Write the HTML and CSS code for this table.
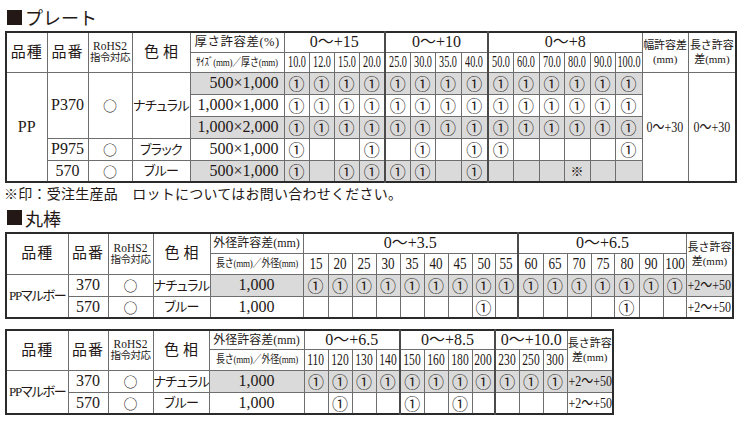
FILE: index.html
```html
<!DOCTYPE html>
<html lang="ja">
<head>
<meta charset="utf-8">
<title>PP</title>
<link rel="stylesheet" href="styles.css">
</head>
<body>
<div class="title"><span class="sq"></span><span>プレート</span></div>
<table class="t t1">
<colgroup>
<col><col><col><col><col>
<col><col><col><col><col><col><col><col><col><col><col><col><col><col>
<col><col>
</colgroup>
<tr class="h1">
<th rowspan="2" class="jp">品種</th>
<th rowspan="2" class="jp">品番</th>
<th rowspan="2" class="rohs">RoHS2<br><span class="rj">指令対応</span></th>
<th rowspan="2" class="jp sp">色相</th>
<th class="hs">厚さ許容差(%)</th>
<th colspan="4" class="grp">0〜+15</th>
<th colspan="4" class="grp g">0〜+10</th>
<th colspan="6" class="grp g">0〜+8</th>
<th rowspan="2" class="tol">幅許容差<br>(mm)</th>
<th rowspan="2" class="tol">長さ許容<br>差(mm)</th>
</tr>
<tr class="h2">
<th class="sz"><span class="cx">ｻｲｽﾞ(mm)／厚さ(mm)</span></th>
<th class="num"><span>10.0</span></th><th class="num"><span>12.0</span></th><th class="num"><span>15.0</span></th><th class="num"><span>20.0</span></th>
<th class="num g"><span>25.0</span></th><th class="num"><span>30.0</span></th><th class="num"><span>35.0</span></th><th class="num"><span>40.0</span></th>
<th class="num g"><span>50.0</span></th><th class="num"><span>60.0</span></th><th class="num"><span>70.0</span></th><th class="num"><span>80.0</span></th><th class="num"><span>90.0</span></th><th class="num"><span>100.0</span></th>
</tr>
<tr class="r sh">
<td rowspan="5" class="txt">PP</td>
<td rowspan="3" class="txt">P370</td>
<td rowspan="3" class="mk">○</td>
<td rowspan="3" class="kn">ナチュラル</td>
<td class="dim s">500×1,000</td>
<td class="c s">①</td><td class="c s">①</td><td class="c s">①</td><td class="c s">①</td>
<td class="c s g">①</td><td class="c s">①</td><td class="c s">①</td><td class="c s">①</td>
<td class="c s g">①</td><td class="c s">①</td><td class="c s">①</td><td class="c s">①</td><td class="c s">①</td><td class="c s">①</td>
<td rowspan="5" class="tv"><span>0〜+30</span></td>
<td rowspan="5" class="tv"><span>0〜+30</span></td>
</tr>
<tr class="r">
<td class="dim">1,000×1,000</td>
<td class="c">①</td><td class="c">①</td><td class="c">①</td><td class="c">①</td>
<td class="c g">①</td><td class="c">①</td><td class="c">①</td><td class="c">①</td>
<td class="c g">①</td><td class="c">①</td><td class="c">①</td><td class="c">①</td><td class="c">①</td><td class="c">①</td>
</tr>
<tr class="r">
<td class="dim s">1,000×2,000</td>
<td class="c s">①</td><td class="c s">①</td><td class="c s">①</td><td class="c s">①</td>
<td class="c s g">①</td><td class="c s">①</td><td class="c s">①</td><td class="c s">①</td>
<td class="c s g">①</td><td class="c s">①</td><td class="c s">①</td><td class="c s">①</td><td class="c s">①</td><td class="c s">①</td>
</tr>
<tr class="r">
<td class="txt">P975</td>
<td class="mk">○</td>
<td class="kn">ブラック</td>
<td class="dim">500×1,000</td>
<td class="c">①</td><td class="c"></td><td class="c"></td><td class="c">①</td>
<td class="c g"></td><td class="c">①</td><td class="c"></td><td class="c">①</td>
<td class="c g">①</td><td class="c"></td><td class="c"></td><td class="c"></td><td class="c"></td><td class="c">①</td>
</tr>
<tr class="r">
<td class="txt">570</td>
<td class="mk">○</td>
<td class="kn">ブルー</td>
<td class="dim s">500×1,000</td>
<td class="c s">①</td><td class="c s"></td><td class="c s">①</td><td class="c s">①</td>
<td class="c s g">①</td><td class="c s">①</td><td class="c s"></td><td class="c s">①</td>
<td class="c s g"></td><td class="c s"></td><td class="c s"></td><td class="c s ast">※</td><td class="c s"></td><td class="c s"></td>
</tr>
</table>
<p class="note">※印：受注生産品　ロットについてはお問い合わせください。</p>

<div class="title t2title"><span class="sq"></span><span>丸棒</span></div>
<table class="t t2">
<colgroup>
<col><col><col><col><col>
<col><col><col><col><col><col><col><col><col><col><col><col><col><col><col><col>
<col>
</colgroup>
<tr class="h1">
<th rowspan="2" class="jp">品種</th>
<th rowspan="2" class="jp">品番</th>
<th rowspan="2" class="rohs">RoHS2<br><span class="rj">指令対応</span></th>
<th rowspan="2" class="jp sp">色相</th>
<th class="hs2">外径許容差(mm)</th>
<th colspan="9" class="grp">0〜+3.5</th>
<th colspan="7" class="grp g">0〜+6.5</th>
<th rowspan="2" class="tol">長さ許容<br>差(mm)</th>
</tr>
<tr class="h2">
<th class="sz"><span class="cx">長さ(mm)／外径(mm)</span></th>
<th class="num2"><span>15</span></th><th class="num2"><span>20</span></th><th class="num2"><span>25</span></th><th class="num2"><span>30</span></th><th class="num2"><span>35</span></th><th class="num2"><span>40</span></th><th class="num2"><span>45</span></th><th class="num2"><span>50</span></th><th class="num2"><span>55</span></th>
<th class="num2 g"><span>60</span></th><th class="num2"><span>65</span></th><th class="num2"><span>70</span></th><th class="num2"><span>75</span></th><th class="num2"><span>80</span></th><th class="num2"><span>90</span></th><th class="num2"><span>100</span></th>
</tr>
<tr class="rr">
<td rowspan="2" class="kn pm">PPマルボー</td>
<td class="txt">370</td>
<td class="mk">○</td>
<td class="kn">ナチュラル</td>
<td class="dim2 s">1,000</td>
<td class="c s">①</td><td class="c s">①</td><td class="c s">①</td><td class="c s">①</td><td class="c s">①</td><td class="c s">①</td><td class="c s">①</td><td class="c s">①</td><td class="c s">①</td>
<td class="c s g">①</td><td class="c s">①</td><td class="c s">①</td><td class="c s">①</td><td class="c s">①</td><td class="c s">①</td><td class="c s">①</td>
<td class="tv s"><span>+2〜+50</span></td>
</tr>
<tr class="rr">
<td class="txt">570</td>
<td class="mk">○</td>
<td class="kn">ブルー</td>
<td class="dim2">1,000</td>
<td class="c"></td><td class="c"></td><td class="c"></td><td class="c"></td><td class="c"></td><td class="c"></td><td class="c"></td><td class="c">①</td><td class="c"></td>
<td class="c g"></td><td class="c"></td><td class="c"></td><td class="c"></td><td class="c">①</td><td class="c"></td><td class="c"></td>
<td class="tv"><span>+2〜+50</span></td>
</tr>
</table>

<table class="t t3">
<colgroup>
<col><col><col><col><col>
<col><col><col><col><col><col><col><col><col><col><col>
<col>
</colgroup>
<tr class="h1">
<th rowspan="2" class="jp">品種</th>
<th rowspan="2" class="jp">品番</th>
<th rowspan="2" class="rohs">RoHS2<br><span class="rj">指令対応</span></th>
<th rowspan="2" class="jp sp">色相</th>
<th class="hs2">外径許容差(mm)</th>
<th colspan="4" class="grp">0〜+6.5</th>
<th colspan="4" class="grp g">0〜+8.5</th>
<th colspan="3" class="grp g">0〜+10.0</th>
<th rowspan="2" class="tol">長さ許容<br>差(mm)</th>
</tr>
<tr class="h2">
<th class="sz"><span class="cx">長さ(mm)／外径(mm)</span></th>
<th class="num3"><span>110</span></th><th class="num3"><span>120</span></th><th class="num3"><span>130</span></th><th class="num3"><span>140</span></th>
<th class="num3 g"><span>150</span></th><th class="num3"><span>160</span></th><th class="num3"><span>180</span></th><th class="num3"><span>200</span></th>
<th class="num3 g"><span>230</span></th><th class="num3"><span>250</span></th><th class="num3"><span>300</span></th>
</tr>
<tr class="rr">
<td rowspan="2" class="kn pm">PPマルボー</td>
<td class="txt">370</td>
<td class="mk">○</td>
<td class="kn">ナチュラル</td>
<td class="dim2 s">1,000</td>
<td class="c s">①</td><td class="c s">①</td><td class="c s">①</td><td class="c s">①</td>
<td class="c s g">①</td><td class="c s">①</td><td class="c s">①</td><td class="c s">①</td>
<td class="c s g">①</td><td class="c s">①</td><td class="c s">①</td>
<td class="tv s"><span>+2〜+50</span></td>
</tr>
<tr class="rr">
<td class="txt">570</td>
<td class="mk">○</td>
<td class="kn">ブルー</td>
<td class="dim2">1,000</td>
<td class="c"></td><td class="c">①</td><td class="c"></td><td class="c"></td>
<td class="c g">①</td><td class="c"></td><td class="c">①</td><td class="c"></td>
<td class="c g"></td><td class="c"></td><td class="c"></td>
<td class="tv"><span>+2〜+50</span></td>
</tr>
</table>
</body>
</html>
```

FILE: styles.css
```css
html, body {
  margin: 0;
  padding: 0;
  background: #ffffff;
}
body {
  width: 740px;
  color: #231815;
  font-family: "Liberation Serif", "Noto Sans CJK JP", serif;
}

.title {
  display: flex;
  align-items: center;
  gap: 3px;
  height: 28px;
  padding: 3px 0 0 7px;
  font-family: "Noto Sans CJK JP", sans-serif;
  font-size: 18px;
  line-height: 1;
}
.sq {
  width: 15px;
  height: 15px;
  background: #231815;
}
.t2title {
  height: 29px;
  padding-top: 0;
}

.note {
  margin: 0;
  height: 18px;
  padding: 2px 0 0 4px;
  font-family: "Noto Sans CJK JP", sans-serif;
  font-size: 14px;
  line-height: 16px;
  letter-spacing: 0.25px;
}

.t {
  border-collapse: collapse;
  table-layout: fixed;
  margin-left: 5px;
  border: 2px solid #2b2b2b;
}
.t th, .t td {
  border: 1px solid #6e6e6e;
  padding: 0;
  text-align: center;
  vertical-align: middle;
  font-weight: normal;
  white-space: nowrap;
  overflow: hidden;
  line-height: 1;
}
.t .g { border-left: 2px solid #4a4a4a; }
.t .s { background: #dadada; }

.t1 { width: 730px; }
.t2 { width: 727px; margin-bottom: 10px; }
.t3 { width: 607px; }

/* table 1 columns */
.t1 col:nth-child(1) { width: 41px; }
.t1 col:nth-child(2) { width: 41px; }
.t1 col:nth-child(3) { width: 44px; }
.t1 col:nth-child(4) { width: 58px; }
.t1 col:nth-child(5) { width: 94px; }
.t1 col:nth-child(n+6) { width: 25px; }
.t1 col:nth-child(9),
.t1 col:nth-child(12),
.t1 col:nth-child(15),
.t1 col:nth-child(17) { width: 26px; }
.t1 col:nth-child(13),
.t1 col:nth-child(19) { width: 27px; }
.t1 col:nth-child(20) { width: 46px; }
.t1 col:nth-child(21) { width: 48px; }

/* table 2 columns */
.t2 col:nth-child(1) { width: 62px; }
.t2 col:nth-child(2) { width: 40px; }
.t2 col:nth-child(3) { width: 45px; }
.t2 col:nth-child(4) { width: 57px; }
.t2 col:nth-child(5) { width: 93px; }
.t2 col:nth-child(n+6) { width: 24px; }
.t2 col:nth-child(6),
.t2 col:nth-child(15),
.t2 col:nth-child(19) { width: 25px; }
.t2 col:nth-child(13),
.t2 col:nth-child(14),
.t2 col:nth-child(18),
.t2 col:nth-child(21) { width: 23px; }
.t2 col:nth-child(22) { width: 47px; }

/* table 3 columns */
.t3 col:nth-child(1) { width: 62px; }
.t3 col:nth-child(2) { width: 40px; }
.t3 col:nth-child(3) { width: 45px; }
.t3 col:nth-child(4) { width: 56px; }
.t3 col:nth-child(5) { width: 95px; }
.t3 col:nth-child(n+6) { width: 24px; }
.t3 col:nth-child(13) { width: 23px; }
.t3 col:nth-child(17) { width: 46px; }

/* row heights */
.t1 .h1 { height: 20px; }
.t1 .h2 { height: 20px; }
.t1 .r { height: 22px; }
.t2 .h1 { height: 20px; }
.t2 .h2 { height: 21px; }
.t3 .h1 { height: 19px; }
.t3 .h2 { height: 21px; }
.rr { height: 22px; }

/* header text */
.jp {
  font-size: 15px;
  letter-spacing: 1px;
}
.sp { letter-spacing: 4px; padding-left: 4px !important; }
.rohs {
  font-size: 11.5px;
  line-height: 11px !important;
}
.rj {
  display: inline-block;
  font-size: 10.5px;
  letter-spacing: -0.5px;
}
.hs {
  font-size: 12.5px;
  letter-spacing: 0.5px;
}
.hs2 {
  font-size: 12px;
  letter-spacing: 0;
}
.sz { font-size: 11px; }
.cx {
  display: inline-block;
  margin: 0 -12px;
  transform: scaleX(0.82);
  letter-spacing: -0.3px;
}
.grp {
  font-size: 16px;
  letter-spacing: 0;
}
.tol {
  font-size: 11px;
  line-height: 14px !important;
  letter-spacing: 0;
}
.num span, .num2 span, .num3 span {
  display: inline-block;
  font-size: 16px;
  margin: 0 -12px;
}
.num span { transform: scaleX(0.64); }
.num2 span { transform: scaleX(0.82); }
.num3 span { transform: scaleX(0.72); }

/* body text */
.txt { font-size: 16px; }
.mk {
  font-family: "Noto Sans CJK JP", sans-serif;
  font-size: 14px;
  font-weight: 300;
}
.kn {
  font-size: 13px;
  font-feature-settings: "palt";
  letter-spacing: -0.6px;
}
.pm { font-size: 13px; letter-spacing: -1.2px; }
.dim {
  font-size: 16px;
  text-align: right !important;
  padding-right: 5px !important;
}
.dim2 { font-size: 16px; }
.c {
  font-family: "Noto Sans CJK JP", sans-serif;
  font-size: 16px;
  font-weight: 300;
}
.ast { font-size: 13px; }
.tv span {
  display: inline-block;
  margin: 0 -12px;
  font-size: 15px;
  transform: scaleX(0.8);
}
```
